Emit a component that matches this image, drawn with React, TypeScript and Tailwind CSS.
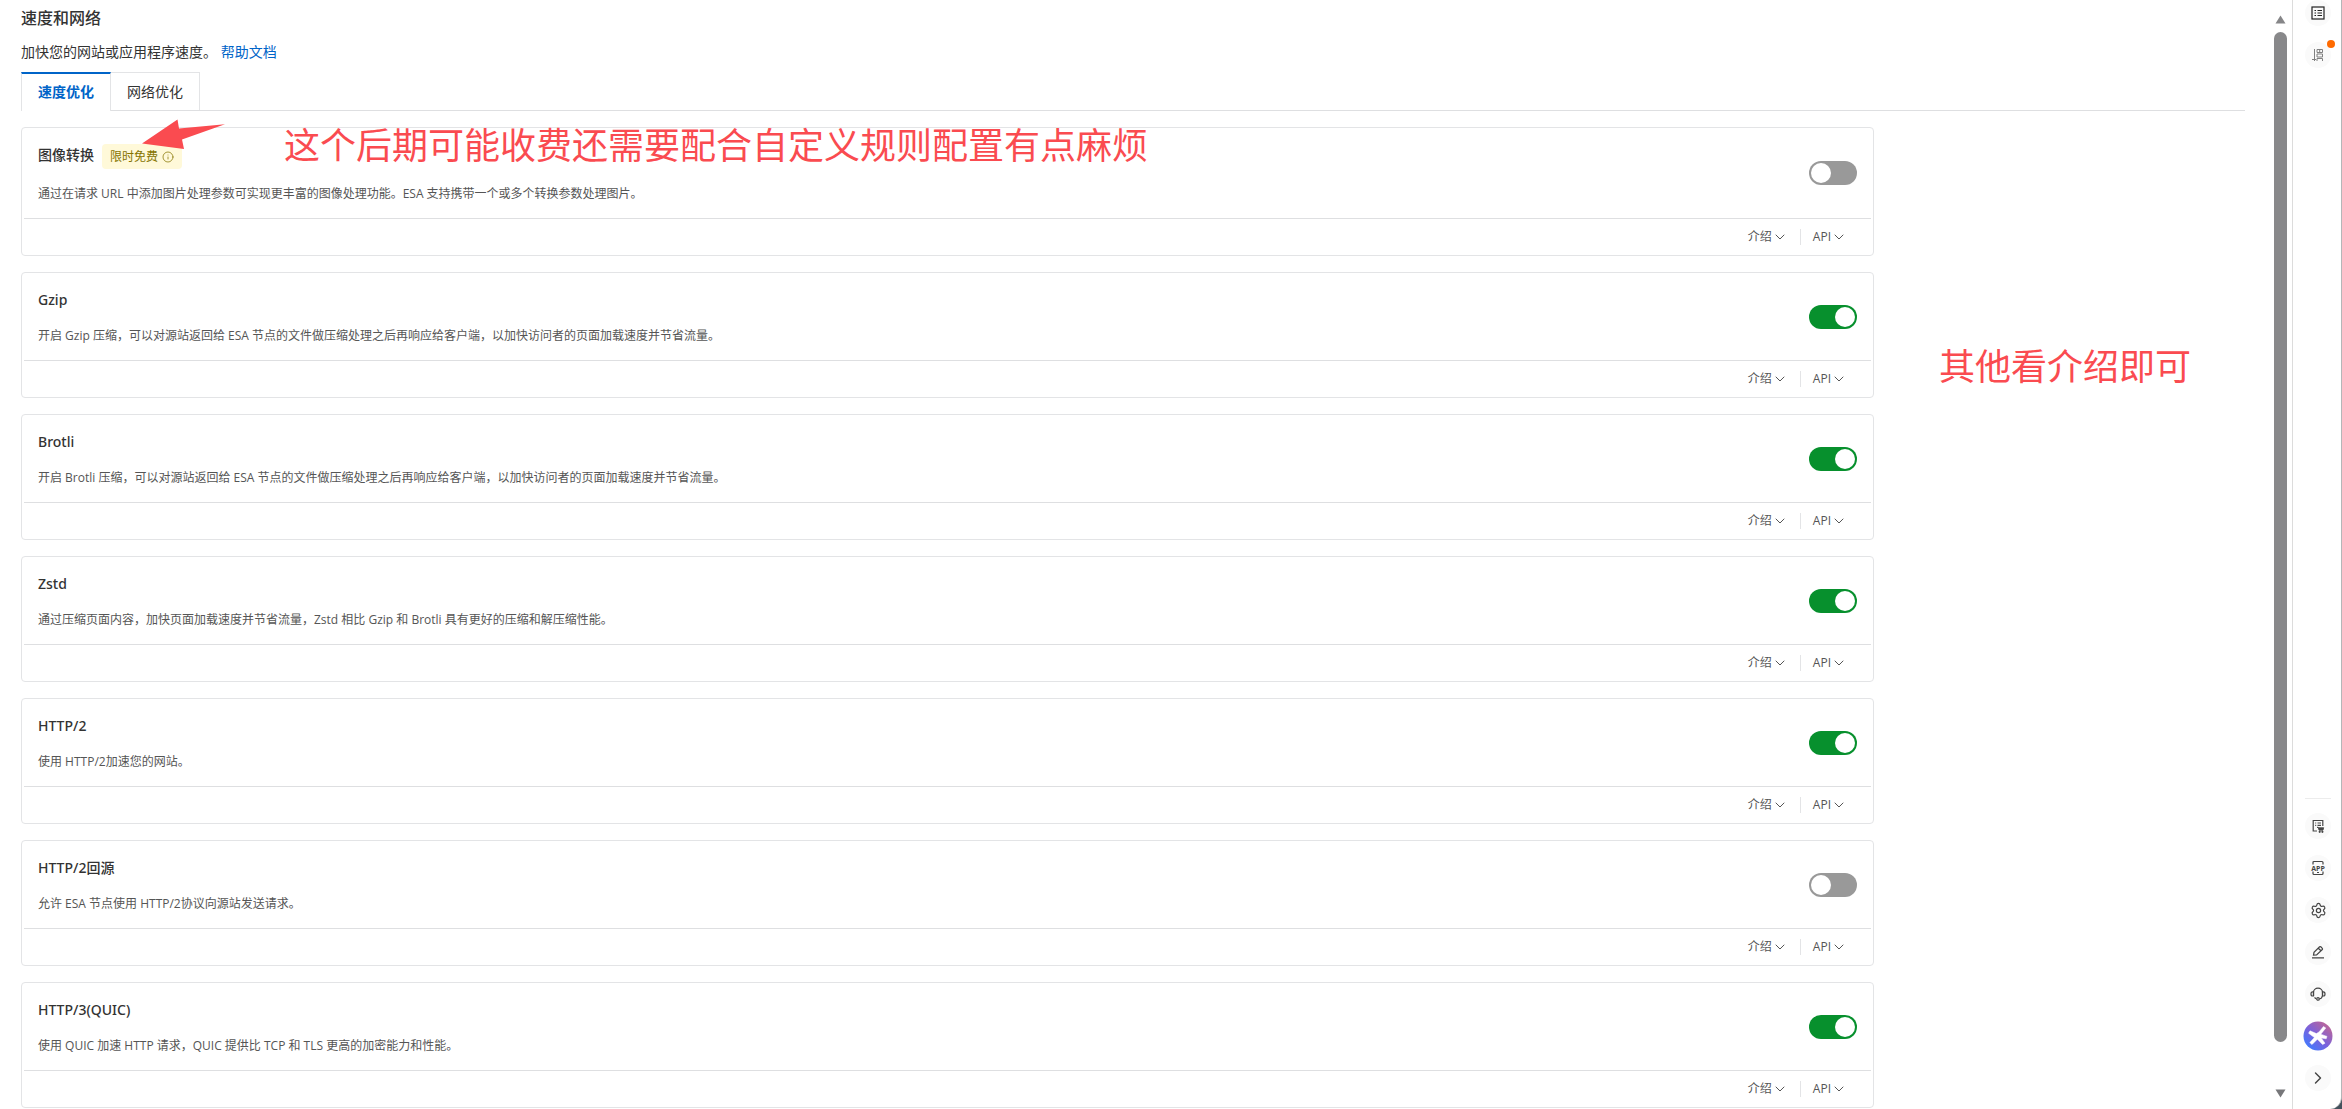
import { useState } from "react";
import type { ReactNode } from "react";
import { ChevronDown, ChevronRight, Info, Settings } from "lucide-react";

interface Feature {
  title: string;
  description: string;
  enabled: boolean;
  tag?: string;
}

const features: Feature[] = [
  {
    title: "图像转换",
    description: "通过在请求 URL 中添加图片处理参数可实现更丰富的图像处理功能。ESA 支持携带一个或多个转换参数处理图片。",
    enabled: false,
    tag: "限时免费",
  },
  {
    title: "Gzip",
    description: "开启 Gzip 压缩，可以对源站返回给 ESA 节点的文件做压缩处理之后再响应给客户端，以加快访问者的页面加载速度并节省流量。",
    enabled: true,
  },
  {
    title: "Brotli",
    description: "开启 Brotli 压缩，可以对源站返回给 ESA 节点的文件做压缩处理之后再响应给客户端，以加快访问者的页面加载速度并节省流量。",
    enabled: true,
  },
  {
    title: "Zstd",
    description: "通过压缩页面内容，加快页面加载速度并节省流量，Zstd 相比 Gzip 和 Brotli 具有更好的压缩和解压缩性能。",
    enabled: true,
  },
  {
    title: "HTTP/2",
    description: "使用 HTTP/2加速您的网站。",
    enabled: true,
  },
  {
    title: "HTTP/2回源",
    description: "允许 ESA 节点使用 HTTP/2协议向源站发送请求。",
    enabled: false,
  },
  {
    title: "HTTP/3(QUIC)",
    description: "使用 QUIC 加速 HTTP 请求，QUIC 提供比 TCP 和 TLS 更高的加密能力和性能。",
    enabled: true,
  },
];

const Toggle = ({ label, defaultChecked }: { label: string; defaultChecked: boolean }) => {
  const [checked, setChecked] = useState(defaultChecked);

  return (
    <label className="flex h-6 w-12 shrink-0 cursor-pointer rounded-full bg-[#999999] p-0.5 has-checked:justify-end has-checked:bg-[#07902d]">
      <input
        type="checkbox"
        role="switch"
        aria-label={label}
        checked={checked}
        onChange={(e) => setChecked(e.target.checked)}
        className="size-5 cursor-pointer appearance-none rounded-full bg-white"
      />
    </label>
  );
};

const FeatureCard = ({ feature }: { feature: Feature }) => (
  <section className="rounded-sm border border-[#e3e4e6] px-0.5">
    <div className="flex items-center justify-between border-b border-[#dedfe1] px-3.5">
      <div className="flex flex-col gap-4 pt-4 pb-[15px]">
        <div className="flex items-start gap-2">
          <h2 className="font-['Noto_Sans','Noto_Sans_CJK_SC',sans-serif] text-sm leading-[22px] font-medium text-[#333333]">
            {feature.title}
          </h2>
          {feature.tag && (
            <span className="flex h-[25px] items-center gap-1 rounded-sm bg-[#fff9d9] px-2 text-xs text-[#857400]">
              {feature.tag}
              <Info size={12} strokeWidth={1.5} />
            </span>
          )}
        </div>
        <p className="text-xs leading-[18px] text-[#555555]">{feature.description}</p>
      </div>
      <Toggle label={feature.title} defaultChecked={feature.enabled} />
    </div>
    <div className="flex h-9 items-center justify-end pr-6 text-xs text-[#555555]">
      <button type="button" className="flex items-center pr-3">
        介绍
        <ChevronDown size={16} strokeWidth={1.5} />
      </button>
      <button type="button" className="flex items-center border-l border-[#e3e4e6] pl-3 leading-3">
        API
        <ChevronDown size={16} strokeWidth={1.5} />
      </button>
    </div>
  </section>
);

const RailButton = ({ label, children }: { label: string; children: ReactNode }) => (
  <button
    type="button"
    aria-label={label}
    className="relative flex size-[26px] items-center justify-center rounded-full bg-[#fafafa] text-[#444444]"
  >
    {children}
  </button>
);

const MenuIcon = () => (
  <svg width="14" height="14" viewBox="0 0 14 14" fill="none" stroke="#222222" strokeWidth="1.2">
    <rect x="1" y="1" width="12" height="12" />
    <path d="M3.5 4.5H5M6.5 4.5H11M3.5 7H5M6.5 7H11M3.5 9.5H5M6.5 9.5H11" strokeWidth="1" />
  </svg>
);

const TrialIcon = () => (
  <svg width="14" height="16" viewBox="0 0 14 16" fill="none" stroke="#808080" strokeWidth="1">
    <path d="M3.5 2V14M1 12.5H5M6 2.5H11.5V5.5H6ZM6 7H11.5V10H6ZM6 14V11.5H11.5V14M8.7 2.5V5.5" />
  </svg>
);

const OrderIcon = () => (
  <svg width="14" height="14" viewBox="0 0 14 14" fill="none" stroke="currentColor" strokeWidth="1.2">
    <path d="M6 12H2.2V1.5H11.8V7" />
    <path d="M4.2 4H5.2M6.5 4H10M4.2 6.3H5.2M6.5 6.3H10" />
    <path d="M6 8.3H7.2L8 11.2H12L12.7 8.7H7.5Z" fill="currentColor" strokeWidth="0.8" />
    <circle cx="8.7" cy="12.8" r="0.5" />
    <circle cx="11.4" cy="12.8" r="0.5" />
  </svg>
);

const AppIcon = () => (
  <svg width="16" height="16" viewBox="0 0 16 16" fill="none" stroke="currentColor" strokeWidth="1.2">
    <path d="M3 4.5V2.5Q3 1.5 4 1.5H12Q13 1.5 13 2.5V4.5M3 11.5V13.5Q3 14.5 4 14.5H12Q13 14.5 13 13.5V11.5M7 12.5H9" />
    <text x="8" y="10.5" textAnchor="middle" fontSize="7" fontWeight="700" fill="currentColor" stroke="none">
      APP
    </text>
  </svg>
);

const EditIcon = () => (
  <svg width="14" height="14" viewBox="0 0 14 14" fill="none" stroke="currentColor" strokeWidth="1.2">
    <path d="M2.5 10.2 3 7.4 8.6 1.8Q9.2 1.3 9.8 1.8L11.3 3.3Q11.8 3.9 11.3 4.5L5.6 9.9ZM7.3 3.2 10 5.8M1 12.8H13" />
  </svg>
);

const HeadsetIcon = () => (
  <svg width="16" height="14" viewBox="0 0 16 14" fill="none" stroke="currentColor" strokeWidth="1.2">
    <path d="M3.5 9V5.5A4.5 4.3 0 0 1 12.5 5.5V9" />
    <path d="M3.5 4.8H2.6Q1 4.8 1 6.9T2.6 9H3.5ZM12.5 4.8H13.4Q15 4.8 15 6.9T13.4 9H12.5Z" />
    <path d="M12.3 9Q12 11.6 9.4 11.9M4.6 10.4Q5.2 11.4 6.2 11.7" />
    <circle cx="8" cy="11.9" r="1.3" />
  </svg>
);

const AssistantIcon = () => (
  <svg width="30" height="30" viewBox="0 0 30 30" className="shrink-0">
    <defs>
      <linearGradient id="assistant" x1="0.1" y1="0.9" x2="0.8" y2="0.1">
        <stop offset="0" stopColor="#3f7cff" />
        <stop offset="0.5" stopColor="#7a62dc" />
        <stop offset="1" stopColor="#b8659c" />
      </linearGradient>
    </defs>
    <circle cx="15" cy="15" r="14.5" fill="url(#assistant)" />
    <path
      d="M20.5 5.5 22.8 7 17.8 13.2 24 15.4 23.2 17.8 18.2 17 22 22.2 19.6 23.6 14.4 18.2 9 23.6 6.8 21.6 11.4 16.6 5.6 12.2 7 9.8 13.4 12.6 16 11Z"
      fill="white"
      stroke="white"
      strokeWidth="0.5"
      strokeLinejoin="round"
    />
  </svg>
);

const ScrollBar = () => (
  <div className="flex w-[18px] shrink-0 flex-col items-center bg-white pt-[15px] pr-[5px] pb-[11px]">
    <svg width="11" height="9" viewBox="0 0 11 9" fill="#868688">
      <path d="M5.5 0.5 10.5 8.5H0.5Z" />
    </svg>
    <div className="mt-2 mb-[47px] w-[13px] flex-1 rounded-full bg-[#88888a]" />
    <svg width="11" height="9" viewBox="0 0 11 9" fill="#77777a">
      <path d="M5.5 8.5 10.5 0.5H0.5Z" />
    </svg>
  </div>
);

const SideRail = () => (
  <aside className="flex w-[50px] shrink-0 flex-col items-center justify-between rounded-br-xl border-r border-l border-r-[#b4b6b8] border-l-[#dcdcdc] bg-white pb-[18px] pl-0.5">
    <div className="flex flex-col gap-4">
      <RailButton label="控制台">
        <MenuIcon />
      </RailButton>
      <RailButton label="免费试用">
        <TrialIcon />
        <span className="absolute -top-0.5 -right-1 size-2 rounded-full bg-[#ff6a00]" />
      </RailButton>
    </div>
    <div className="flex flex-col items-center gap-4 border-t border-[#ececec] pt-3.5">
      <RailButton label="订单">
        <OrderIcon />
      </RailButton>
      <RailButton label="APP">
        <AppIcon />
      </RailButton>
      <RailButton label="设置">
        <Settings size={17} strokeWidth={1.7} />
      </RailButton>
      <RailButton label="反馈">
        <EditIcon />
      </RailButton>
      <RailButton label="客服">
        <HeadsetIcon />
      </RailButton>
      <RailButton label="AI 助理">
        <AssistantIcon />
      </RailButton>
      <RailButton label="收起">
        <ChevronRight size={20} strokeWidth={1.7} />
      </RailButton>
    </div>
  </aside>
);

export default function App() {
  return (
    <div className="flex h-screen overflow-hidden bg-[#44515c] font-['Open_Sans','Noto_Sans_CJK_SC',sans-serif]">
      <main className="relative min-w-0 flex-1 overflow-hidden bg-white pr-[29px] pl-[21px] text-[#333333]">
        <h1 className="pt-1.5 text-base font-medium">速度和网络</h1>
        <p className="mt-3 text-sm">
          加快您的网站或应用程序速度。{" "}
          <a href="#help" className="text-[#0064c8]">帮助文档</a>
        </p>
        <div role="tablist" className="mt-2.5 flex border-b border-[#dedfe1] text-sm">
          <button
            type="button"
            role="tab"
            aria-selected="true"
            className="-mb-px h-[39px] border-x border-t-2 border-x-[#e3e4e6] border-t-[#0064c8] bg-white px-4 pb-0.5 font-bold text-[#0064c8]"
          >
            速度优化
          </button>
          <button type="button" role="tab" aria-selected="false" className="h-[38px] border-t border-r border-[#e3e4e6] px-4">
            网络优化
          </button>
        </div>
        <div className="mt-4 flex flex-col gap-4 pr-[371px]">
          {features.map((feature) => (
            <FeatureCard key={feature.title} feature={feature} />
          ))}
        </div>

        {/* notes laid over the page */}
        <svg className="absolute top-[118px] left-[141px]" width="84" height="32" viewBox="0 0 84 32" fill="#fa4b50">
          <path d="M1 25.5 36.5 1.5 38 10.5 84 6.2 41 21.5 43 31Z" />
        </svg>
        <p className="absolute top-[122px] left-[284px] text-4xl leading-[48px] whitespace-nowrap text-[#fa4b50]">
          这个后期可能收费还需要配合自定义规则配置有点麻烦
        </p>
        <p className="absolute top-[343px] right-[83px] text-4xl leading-[48px] whitespace-nowrap text-[#fa4b50]">
          其他看介绍即可
        </p>
      </main>
      <ScrollBar />
      <SideRail />
    </div>
  );
}
